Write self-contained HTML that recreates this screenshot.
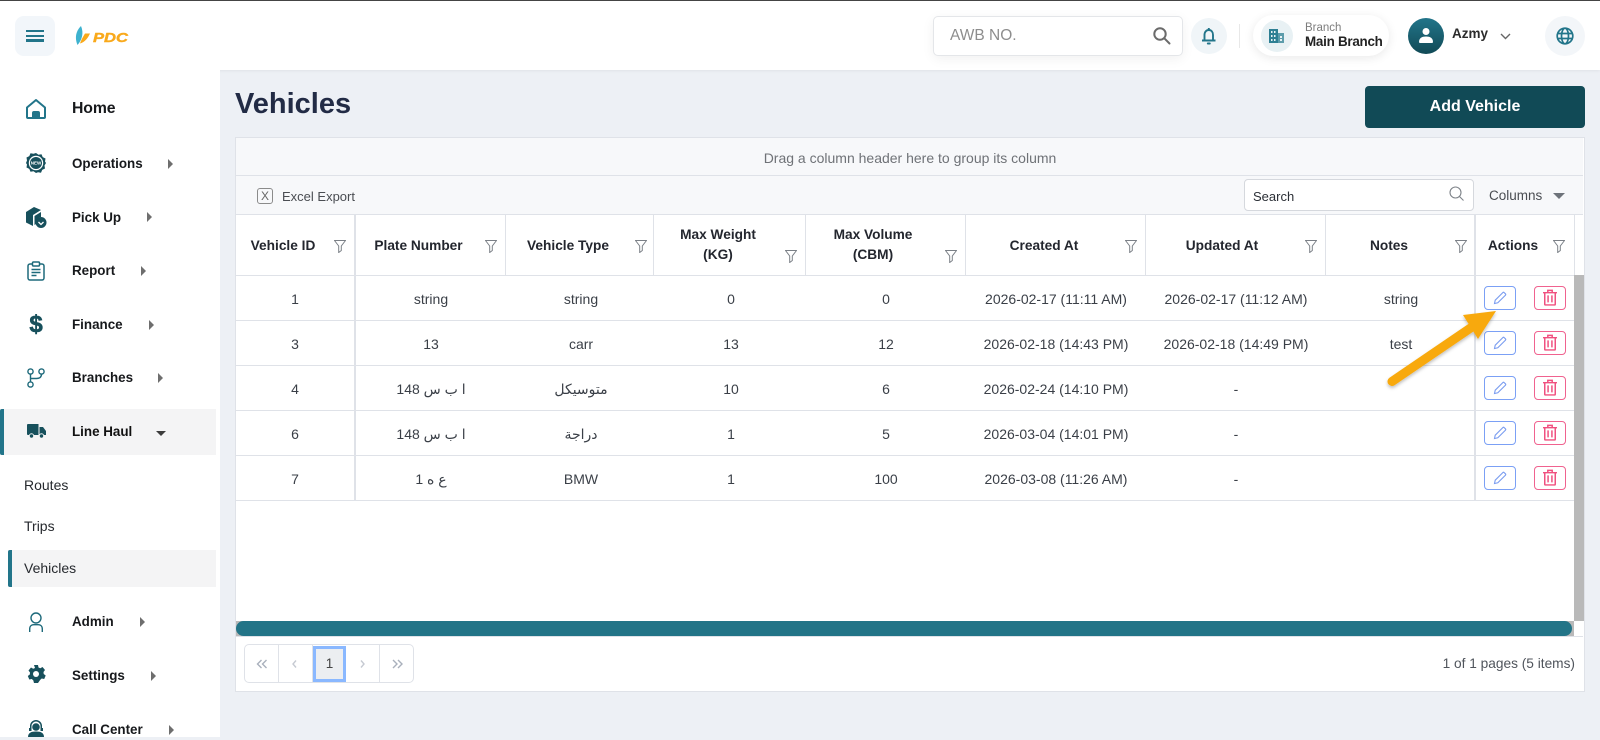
<!DOCTYPE html>
<html><head><meta charset="utf-8"><title>Vehicles</title>
<style>
html,body{margin:0;padding:0}
body{width:1600px;height:737px;overflow:hidden;position:relative;background:#edf0f5;font-family:"Liberation Sans","Noto Sans CJK SC",sans-serif;color:#2b2f36}
.a{position:absolute}
.t{position:absolute;white-space:nowrap;line-height:20px}
.c{transform:translateX(-50%);text-align:center}
.nav{position:absolute;left:72px;font-size:13.4px;font-weight:700;color:#17191c;line-height:20px;white-space:nowrap}
.sub{position:absolute;left:24px;font-size:14px;color:#26292e;line-height:20px}
.ar{position:absolute;width:0;height:0;border-left:5px solid #6e6e6e;border-top:5px solid transparent;border-bottom:5px solid transparent}
.hl{position:absolute;left:236px;width:1338px;height:1px;background:#dfe2e8}
.vl{position:absolute;width:1px;background:#dfe2e8}
.h{position:absolute;font-size:13.7px;font-weight:700;color:#23262e;white-space:nowrap;transform:translateX(-50%);text-align:center;line-height:20px}
.d{position:absolute;font-size:14px;color:#3a3f47;white-space:nowrap;transform:translateX(-50%);line-height:20px;font-family:"Liberation Sans","DejaVu Sans",sans-serif}
.btn{position:absolute;width:30px;height:22px;border:1px solid #7ba0f5;border-radius:4px;background:#fff}
.del{border-color:#f0628f}
svg{position:absolute;display:block;overflow:visible}
</style></head><body>

<!-- header -->
<div class="a" style="left:0;top:0;width:1600px;height:70px;background:#fff;box-shadow:0 1px 3px rgba(0,0,0,.06)"></div>
<div class="a" style="left:0;top:0;width:1600px;height:1px;background:#444"></div>
<div class="a" style="left:15px;top:16px;width:40px;height:40px;border-radius:9px;background:#f2f6fa"></div>
<div class="a" style="left:26px;top:30px;width:18px;height:2.3px;background:#22758a"></div>
<div class="a" style="left:26px;top:34.8px;width:18px;height:2.3px;background:#22758a"></div>
<div class="a" style="left:26px;top:39.4px;width:18px;height:2.3px;background:#22758a"></div>
<!-- logo -->
<svg style="left:0;top:0" width="140" height="70"><path d="M81 26C75 32 75 39 77.500 45C82 40 84 33 81 26Z" fill="#3eb2cf"/><path d="M90 33.500L85 33.500C83 37 81 40 80 43.500C85 42 88 38 90 33.500Z" fill="#f9a91b"/><text x="93" y="42" font-family="Liberation Sans" font-size="12.500" font-weight="700" font-style="italic" fill="#f9a91b" stroke="#f9a91b" stroke-width=".4" textLength="35" lengthAdjust="spacingAndGlyphs">PDC</text></svg>

<!-- search -->
<div class="a" style="left:933px;top:16px;width:248px;height:38px;border:1px solid #e4e6e9;border-radius:5px;background:#fff;box-shadow:0 3px 12px rgba(0,0,0,.06)"></div>
<div class="t" style="left:950px;top:26px;font-size:15.500px;color:#8d8d8d">AWB NO.</div>
<svg style="left:1153px;top:27px" width="18" height="18" fill="none" stroke="#6b6b6b" stroke-width="2"><circle cx="7" cy="7" r="5.700"/><path d="M11.200 11.200l5.300 5.300" stroke-linecap="round"/></svg>
<!-- bell -->
<div class="a" style="left:1191px;top:18px;width:36px;height:36px;border-radius:50%;background:#f0f5f8"></div>
<svg style="left:1201px;top:27px" width="16" height="18" fill="none" stroke="#22758a" stroke-width="1.900"><path d="M1 13.500h13.500M3.500 13.500V8c0-3 1.800-5 4.300-5s4.200 2 4.200 5v5.500"/><path d="M6.800 16.500h2" stroke-linecap="round"/><path d="M7.800 1v1.500"/></svg>
<div class="a" style="left:1239px;top:24px;width:1px;height:24px;background:#e8e8e8"></div>
<!-- branch -->
<div class="a" style="left:1253px;top:15px;width:136px;height:41px;border-radius:21px;background:#fff;box-shadow:0 2px 10px rgba(0,0,0,.09)"></div>
<div class="a" style="left:1261px;top:20px;width:32px;height:32px;border-radius:50%;background:#e8f1f4"></div>
<svg style="left:1269px;top:28px" width="16" height="16" fill="#2d7f93"><path d="M0 1h9v14H0z"/><path d="M9 5h6v10H9z" opacity=".75"/><path d="M2 3h1.500v2H2zM5 3h1.500v2H5zM2 7h1.500v2H2zM5 7h1.500v2H5zM2 11h1.500v2H2zM5 11h1.500v2H5zM11 8h2v2h-2zM11 11h2v2h-2z" fill="#e8f1f4"/></svg>
<div class="t" style="left:1305px;top:18px;font-size:11.500px;color:#7d7d7d">Branch</div>
<div class="t" style="left:1305px;top:32px;font-size:13.400px;font-weight:700;color:#232323;letter-spacing:-.25px">Main Branch</div>
<!-- user -->
<div class="a" style="left:1408px;top:18px;width:36px;height:36px;border-radius:50%;background:linear-gradient(#22758a,#114a56)"></div>
<svg style="left:1418px;top:27px" width="16" height="17" fill="#fff"><circle cx="8" cy="4.500" r="3.500"/><path d="M1 15c0-4 3-5.500 7-5.500s7 1.500 7 5.500c0 .6-.5 1-1 1H2c-.5 0-1-.4-1-1z"/></svg>
<div class="t" style="left:1452px;top:24px;font-size:13.500px;font-weight:700;color:#2b2b2b">Azmy</div>
<svg style="left:1500px;top:33px" width="11" height="7" fill="none" stroke="#666" stroke-width="1.400"><path d="M1 1l4.500 4.500L10 1"/></svg>
<div class="a" style="left:1545px;top:16px;width:40px;height:40px;border-radius:50%;background:#f3f6f9"></div>
<svg style="left:1556px;top:27px" width="18" height="18" fill="none" stroke="#22758a" stroke-width="1.700"><circle cx="9" cy="9" r="7.800"/><ellipse cx="9" cy="9" rx="3.500" ry="7.800"/><path d="M1.500 6.500h15M1.500 11.500h15"/></svg>

<!-- sidebar -->
<div class="a" style="left:0;top:70px;width:220px;height:667px;background:#fff"></div>
<div class="a" style="left:0;top:409px;width:216px;height:46px;background:#f4f4f5"></div>
<div class="a" style="left:0;top:409px;width:4px;height:46px;background:#22758a;border-radius:2px 0 0 2px"></div>
<div class="a" style="left:8px;top:550px;width:208px;height:37px;background:#f4f4f5"></div>
<div class="a" style="left:8px;top:550px;width:4px;height:37px;background:#22758a;border-radius:2px 0 0 2px"></div>

<svg style="left:26px;top:99px" width="20" height="20" fill="none" stroke="#22758a" stroke-width="2"><path d="M1 8.500L10 1l9 7.500V18a1 1 0 0 1-1 1H2a1 1 0 0 1-1-1z" stroke-linejoin="round"/><path d="M7 19v-5a1 1 0 0 1 1-1h4a1 1 0 0 1 1 1v5" fill="#22758a"/></svg>
<div class="nav" style="top:98.500px;font-size:15.800px;letter-spacing:-.1px">Home</div>

<svg style="left:26px;top:153px" width="20" height="20"><path d="M10 0l2.500 1.800 3-.5 1.200 2.800 2.800 1.400-.5 3L20 10l-1.500 2.500.5 3-2.800 1.400-1.200 2.800-3-.5L10 20l-2.500-1.800-3 .5-1.200-2.800L.5 14.500l.5-3L0 10l1-2.500-.5-3 2.800-1.400 1.200-2.800 3 .5z" fill="#17505c"/><circle cx="10" cy="10" r="7.200" fill="#fff"/><circle cx="10" cy="10" r="6" fill="#17505c"/><text x="10" y="11.700" text-anchor="middle" font-size="4.500" font-weight="700" fill="#fff" font-family="Liberation Sans">NEW</text></svg>
<div class="nav" style="top:154px">Operations</div><div class="ar" style="left:168px;top:159px"></div>

<svg style="left:26px;top:206px" width="21" height="22" fill="#17505c"><path d="M0 6l8-5 7 3-8 5v11l-7-3.500zM8.500 10l6.500-4v5a6 6 0 0 0-5 7l-1.500 1z"/><circle cx="15" cy="16.500" r="5.500"/><path d="M12.500 16l2.500 2.500 2.500-2.500" fill="none" stroke="#fff" stroke-width="1.300"/></svg>
<div class="nav" style="top:208px">Pick Up</div><div class="ar" style="left:147px;top:212px"></div>

<svg style="left:27px;top:261px" width="18" height="20" fill="none" stroke="#1e6a7b" stroke-width="1.500"><rect x="1" y="3" width="16" height="16" rx="2"/><rect x="5.500" y="1" width="7" height="4" rx="1" fill="#fff"/><path d="M4.500 8.500h9M4.500 11.500h9M4.500 14.500h5"/></svg>
<div class="nav" style="top:261px">Report</div><div class="ar" style="left:141px;top:266px"></div>

<div class="t" style="left:27px;top:313px;width:18px;text-align:center;font-size:24px;line-height:24px;font-weight:700;color:#17505c;-webkit-text-stroke:.6px #17505c">$</div>
<div class="nav" style="top:315px">Finance</div><div class="ar" style="left:149px;top:320px"></div>

<svg style="left:27px;top:368px" width="18" height="20" fill="none" stroke="#1e6a7b" stroke-width="1.400"><circle cx="3.500" cy="3.500" r="2.600"/><circle cx="14.500" cy="3.500" r="2.600"/><circle cx="3.500" cy="16.500" r="2.600"/><path d="M3.500 6v8M14.500 6c0 4-3 4.500-5 4.500H3.500"/></svg>
<div class="nav" style="top:368px">Branches</div><div class="ar" style="left:158px;top:373px"></div>

<svg style="left:27px;top:423px" width="19" height="16" fill="#17505c"><path d="M1 1h10.500v11H1a1 1 0 0 1-1-1V2a1 1 0 0 1 1-1zM12.500 4H16l3 4v4h-6.500z"/><circle cx="4.500" cy="13" r="2.200" stroke="#f4f4f5"/><circle cx="14.500" cy="13" r="2.200" stroke="#f4f4f5"/></svg>
<div class="nav" style="top:422px;color:#111">Line Haul</div>
<div class="a" style="left:156px;top:431px;width:0;height:0;border-top:5px solid #3c3c3c;border-left:5px solid transparent;border-right:5px solid transparent"></div>

<div class="sub" style="top:475px">Routes</div>
<div class="sub" style="top:516px">Trips</div>
<div class="sub" style="top:558px">Vehicles</div>

<svg style="left:29px;top:612px" width="14" height="20" fill="none" stroke="#1e6a7b" stroke-width="1.400"><circle cx="7" cy="6" r="5"/><path d="M.7 20v-3c0-3 2-4.300 4-4.300h4.600c2 0 4 1.300 4 4.300v3"/></svg>
<div class="nav" style="top:612px">Admin</div><div class="ar" style="left:140px;top:617px"></div>

<svg style="left:27px;top:665px" width="18" height="18"><path d="M7 0h4l.5 2.500 1.800.8 2.200-1.300 2.500 3-1.500 2 .2 2 2 1.500-1.500 3.500-2.500-.5-1.500 1.400L11 18H7l-.7-2.600-1.500-1.400-2.500.5L.8 11l2-1.500.2-2-1.500-2 2.500-3 2.200 1.300 1.800-.8z" fill="#17505c"/><circle cx="9" cy="9" r="3" fill="#fff"/></svg>
<div class="nav" style="top:666px">Settings</div><div class="ar" style="left:151px;top:671px"></div>

<svg style="left:27px;top:719px" width="18" height="18" fill="#17505c"><path d="M3 7a6 6 0 0 1 12 0v2h1v3h-2.500V7a4.500 4.500 0 0 0-9 0v5H2V9h1z"/><circle cx="9" cy="8" r="3.800"/><path d="M1 18c0-4 3-5.500 8-5.500s8 1.500 8 5.500z"/></svg>
<div class="nav" style="top:720px">Call Center</div><div class="ar" style="left:169px;top:725px"></div>

<!-- page title -->
<div class="t" style="left:235px;top:86px;font-size:29px;line-height:36px;font-weight:700;color:#222b45">Vehicles</div>
<div class="a" style="left:1365px;top:86px;width:220px;height:42px;border-radius:4px;background:#114a56;color:#fff;font-size:16px;font-weight:700;line-height:42px;text-align:center">Add Vehicle</div>

<!-- grid card -->
<div class="a" style="left:235px;top:137px;width:1348px;height:553px;border:1px solid #dfe2e8;background:#fff"></div>
<div class="a" style="left:236px;top:138px;width:1347px;height:76px;background:#f7f8fa"></div>
<div class="hl" style="top:175px;width:1347px"></div>
<div class="hl" style="top:214px;width:1347px"></div>
<div class="t c" style="left:910px;top:148px;font-size:14px;color:#6f7277">Drag a column header here to group its column</div>

<div class="a" style="left:257px;top:188px;width:14px;height:14px;border:1px solid #8b8b8b;border-radius:3px;font-size:12px;line-height:14px;text-align:center;color:#666">X</div>
<div class="t" style="left:282px;top:187px;font-size:13px;color:#4a4d52">Excel Export</div>

<div class="a" style="left:1244px;top:179px;width:228px;height:30px;border:1px solid #d5d8dd;border-radius:4px;background:#fff"></div>
<div class="t" style="left:1253px;top:187px;font-size:13px;color:#2b2f36">Search</div>
<svg style="left:1449px;top:186px" width="16" height="16" fill="none" stroke="#7d8288" stroke-width="1.100"><circle cx="6.500" cy="6.500" r="5.500"/><path d="M10.500 10.500l4 4"/></svg>
<div class="t" style="left:1489px;top:186px;font-size:13.500px;color:#4a4d52">Columns</div>
<div class="a" style="left:1553px;top:193px;width:0;height:0;border-top:6px solid #6e737a;border-left:6px solid transparent;border-right:6px solid transparent"></div>

<!-- lines -->
<div class="hl" style="top:275px"></div><div class="hl" style="top:320px"></div><div class="hl" style="top:365px"></div><div class="hl" style="top:410px"></div><div class="hl" style="top:455px"></div><div class="hl" style="top:500px"></div>
<div class="vl" style="left:354px;top:214px;height:287px;width:2px"></div>
<div class="vl" style="left:505px;top:214px;height:61px"></div>
<div class="vl" style="left:653px;top:214px;height:61px"></div>
<div class="vl" style="left:805px;top:214px;height:61px"></div>
<div class="vl" style="left:965px;top:214px;height:61px"></div>
<div class="vl" style="left:1145px;top:214px;height:61px"></div>
<div class="vl" style="left:1325px;top:214px;height:61px"></div>
<div class="vl" style="left:1474px;top:214px;height:287px;width:2px"></div>
<div class="vl" style="left:1574px;top:214px;height:61px"></div>

<!-- headers -->
<div class="h" style="left:283px;top:236px">Vehicle ID</div>
<div class="h" style="left:418.500px;top:236px">Plate Number</div>
<div class="h" style="left:568px;top:236px">Vehicle Type</div>
<div class="h" style="left:718px;top:225px">Max Weight<br>(KG)</div>
<div class="h" style="left:873px;top:225px">Max Volume<br>(CBM)</div>
<div class="h" style="left:1044px;top:236px">Created At</div>
<div class="h" style="left:1222px;top:236px">Updated At</div>
<div class="h" style="left:1389px;top:236px">Notes</div>
<div class="h" style="left:1513px;top:236px">Actions</div>
<svg width="0" height="0"><defs><symbol id="f" viewBox="0 0 12 13"><path d="M.5 .5h11L7.300 6v4.500L4.700 12.500V6z" fill="none" stroke="#7b8087" stroke-width="1"/></symbol>
<symbol id="p" viewBox="0 0 14 14"><path d="M1.500 12.500l.7-3.300L9.800 1.600a1 1 0 0 1 1.400 0l1.200 1.200a1 1 0 0 1 0 1.400L4.800 11.800z" fill="none" stroke="#7b9df0" stroke-width="1.100"/></symbol>
<symbol id="r" viewBox="0 0 16 18"><path d="M0 3.500h16M5.500 3V.8h5V3M2 3.500v13a1 1 0 0 0 1 1h10a1 1 0 0 0 1-1v-13M5.800 6.500v8M10.200 6.500v8" fill="none" stroke="#f0507f" stroke-width="1.700"/></symbol></defs></svg>
<svg style="left:334px;top:240px" width="12" height="13"><use href="#f"/></svg>
<svg style="left:485px;top:240px" width="12" height="13"><use href="#f"/></svg>
<svg style="left:635px;top:240px" width="12" height="13"><use href="#f"/></svg>
<svg style="left:785px;top:250px" width="12" height="13"><use href="#f"/></svg>
<svg style="left:945px;top:250px" width="12" height="13"><use href="#f"/></svg>
<svg style="left:1125px;top:240px" width="12" height="13"><use href="#f"/></svg>
<svg style="left:1305px;top:240px" width="12" height="13"><use href="#f"/></svg>
<svg style="left:1455px;top:240px" width="12" height="13"><use href="#f"/></svg>
<svg style="left:1553px;top:240px" width="12" height="13"><use href="#f"/></svg>

<!-- rows -->
<div class="d" style="left:295px;top:289px">1</div><div class="d" style="left:431px;top:289px">string</div><div class="d" style="left:581px;top:289px">string</div><div class="d" style="left:731px;top:289px">0</div><div class="d" style="left:886px;top:289px">0</div><div class="d" style="left:1056px;top:289px">2026-02-17 (11:11 AM)</div><div class="d" style="left:1236px;top:289px">2026-02-17 (11:12 AM)</div><div class="d" style="left:1401px;top:289px">string</div>
<div class="d" style="left:295px;top:334px">3</div><div class="d" style="left:431px;top:334px">13</div><div class="d" style="left:581px;top:334px">carr</div><div class="d" style="left:731px;top:334px">13</div><div class="d" style="left:886px;top:334px">12</div><div class="d" style="left:1056px;top:334px">2026-02-18 (14:43 PM)</div><div class="d" style="left:1236px;top:334px">2026-02-18 (14:49 PM)</div><div class="d" style="left:1401px;top:334px">test</div>
<div class="d" style="left:295px;top:379px">4</div><div class="d" style="left:431px;top:379px">ا ب س 148</div><div class="d" style="left:581px;top:379px">متوسيكل</div><div class="d" style="left:731px;top:379px">10</div><div class="d" style="left:886px;top:379px">6</div><div class="d" style="left:1056px;top:379px">2026-02-24 (14:10 PM)</div><div class="d" style="left:1236px;top:379px">-</div>
<div class="d" style="left:295px;top:424px">6</div><div class="d" style="left:431px;top:424px">ا ب س 148</div><div class="d" style="left:581px;top:424px">دراجة</div><div class="d" style="left:731px;top:424px">1</div><div class="d" style="left:886px;top:424px">5</div><div class="d" style="left:1056px;top:424px">2026-03-04 (14:01 PM)</div><div class="d" style="left:1236px;top:424px">-</div>
<div class="d" style="left:295px;top:469px">7</div><div class="d" style="left:431px;top:469px">ع ه 1</div><div class="d" style="left:581px;top:469px">BMW</div><div class="d" style="left:731px;top:469px">1</div><div class="d" style="left:886px;top:469px">100</div><div class="d" style="left:1056px;top:469px">2026-03-08 (11:26 AM)</div><div class="d" style="left:1236px;top:469px">-</div>

<!-- action buttons -->
<div class="btn" style="left:1484px;top:286px"></div><div class="btn del" style="left:1534px;top:286px"></div>
<div class="btn" style="left:1484px;top:331px"></div><div class="btn del" style="left:1534px;top:331px"></div>
<div class="btn" style="left:1484px;top:376px"></div><div class="btn del" style="left:1534px;top:376px"></div>
<div class="btn" style="left:1484px;top:421px"></div><div class="btn del" style="left:1534px;top:421px"></div>
<div class="btn" style="left:1484px;top:466px"></div><div class="btn del" style="left:1534px;top:466px"></div>
<svg style="left:1493px;top:291px" width="14" height="14"><use href="#p"/></svg><svg style="left:1543px;top:289px" width="14" height="17"><use href="#r"/></svg>
<svg style="left:1493px;top:336px" width="14" height="14"><use href="#p"/></svg><svg style="left:1543px;top:334px" width="14" height="17"><use href="#r"/></svg>
<svg style="left:1493px;top:381px" width="14" height="14"><use href="#p"/></svg><svg style="left:1543px;top:379px" width="14" height="17"><use href="#r"/></svg>
<svg style="left:1493px;top:426px" width="14" height="14"><use href="#p"/></svg><svg style="left:1543px;top:424px" width="14" height="17"><use href="#r"/></svg>
<svg style="left:1493px;top:471px" width="14" height="14"><use href="#p"/></svg><svg style="left:1543px;top:469px" width="14" height="17"><use href="#r"/></svg>

<!-- scrollbars -->
<div class="a" style="left:1574px;top:275px;width:10px;height:346px;background:#b9b9b9"></div>
<div class="a" style="left:236px;top:621px;width:1338px;height:15px;background:#b9b9b9"></div>
<div class="a" style="left:236px;top:621px;width:1336px;height:15px;border-radius:8px;background:#227487"></div>
<div class="hl" style="top:636px;width:1347px"></div>

<!-- pager -->
<div class="a" style="left:244px;top:644px;width:168px;height:37px;border:1px solid #dfe2e8;border-radius:5px;background:#fff"></div>
<div class="vl" style="left:278px;top:645px;height:37px"></div><div class="vl" style="left:312px;top:645px;height:37px"></div><div class="vl" style="left:379px;top:645px;height:37px"></div>
<div class="a" style="left:313px;top:646px;width:27px;height:30px;border:3px solid #8ab8ff;background:#eceef1;font-size:13.500px;line-height:30px;text-align:center;color:#444">1</div>
<svg style="left:256px;top:658px" width="150" height="12" fill="none" stroke="#a9b0bc" stroke-width="1.400"><path d="M5.500 2L1.500 6l4 4M10.500 2L6.500 6l4 4"/><path d="M40 2.500l-3 3.500 3 3.500" stroke="#c6cad2"/><path d="M105 2.500l3 3.500-3 3.500" stroke="#c6cad2"/><path d="M137 2l4 4-4 4M142 2l4 4-4 4"/></svg>
<div class="t" style="right:25px;top:654px;font-size:13.700px;color:#50555c">1 of 1 pages (5 items)</div>

<!-- annotation arrow -->
<svg style="left:0;top:0" width="1600" height="737"><defs><filter id="s" x="-20%" y="-20%" width="140%" height="140%"><feDropShadow dx="0" dy="2" stdDeviation="1.500" flood-color="#000" flood-opacity=".25"/></filter></defs><g filter="url(#s)"><path d="M1392 381.500L1472 327" stroke="#f8a90c" stroke-width="9" stroke-linecap="round"/><path d="M1496 311L1463 315L1478 339Z" fill="#f8a90c"/></g></svg>
</body></html>
